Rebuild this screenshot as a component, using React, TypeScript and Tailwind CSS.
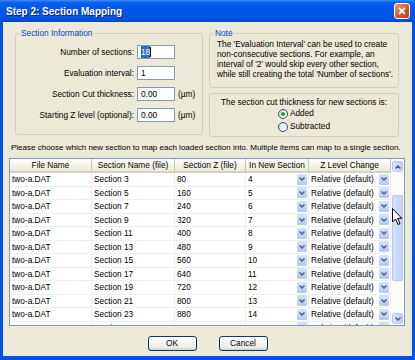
import React from "react";

const rows = [
  ["Section 3", "80", "4"],
  ["Section 5", "160", "5"],
  ["Section 7", "240", "6"],
  ["Section 9", "320", "7"],
  ["Section 11", "400", "8"],
  ["Section 13", "480", "9"],
  ["Section 15", "560", "10"],
  ["Section 17", "640", "11"],
  ["Section 19", "720", "12"],
  ["Section 21", "800", "13"],
  ["Section 23", "880", "14"],
  ["Section 25", "960", "15"],
];

function Chevron({ up = false }: { up?: boolean }) {
  return (
    <svg width="6" height="4" viewBox="0 0 6 4">
      <path
        d={up ? "M0.5 3.5 L3 1 L5.5 3.5" : "M0.5 0.5 L3 3 L5.5 0.5"}
        stroke="#4D6185"
        strokeWidth="1.5"
        fill="none"
      />
    </svg>
  );
}

function DropBtn() {
  return (
    <span className="flex h-[11px] w-[10px] shrink-0 items-center justify-center rounded-[1px] bg-[linear-gradient(to_bottom,#D6E2FE,#B4C8F8)]">
      <Chevron />
    </span>
  );
}

function Field({
  label,
  value,
  unit,
  selected,
}: {
  label: string;
  value: string;
  unit?: boolean;
  selected?: boolean;
}) {
  return (
    <>
      <span className="text-right leading-[14px]">{label}</span>
      <span className="flex h-[14px] items-center border border-[#7F9DB9] bg-white pl-[3px]">
        {selected ? (
          <>
            <span className="bg-[#316AC5] text-white">{value}</span>
            <span className="h-[10px] w-[1px] bg-black" />
          </>
        ) : (
          value
        )}
      </span>
      <span className="leading-[14px]">{unit ? "(µm)" : ""}</span>
    </>
  );
}

function Radio({ checked, label }: { checked?: boolean; label: string }) {
  return (
    <div className="flex h-[13px] items-center gap-[2px]">
      <span className="flex h-[10px] w-[10px] items-center justify-center rounded-full border border-[#1C5180] bg-[linear-gradient(135deg,#DCDCD5,#FFFFFF)]">
        {checked && <span className="h-[4px] w-[4px] rounded-full bg-[#21A121]" />}
      </span>
      <span>{label}</span>
    </div>
  );
}

export default function App() {
  return (
    <div className="relative flex h-[360px] w-[415px] flex-col bg-[#0054E3] font-['Liberation_Sans',Arial,sans-serif] text-[8.3px] text-black">
      {/* Title bar */}
      <div className="flex h-[22px] shrink-0 items-center justify-between bg-[linear-gradient(to_bottom,#3E8CF8_0%,#0A5FEA_12%,#0058E8_45%,#0054E3_80%,#0046CF_100%)] pl-[6px] pr-[5px]">
        <span className="text-[10px] font-bold text-white [text-shadow:1px_1px_0_#0A1F8A]">
          Step 2: Section Mapping
        </span>
        <span className="flex h-[16px] w-[16px] items-center justify-center rounded-[3px] border border-white bg-[linear-gradient(135deg,#F09C7C,#D8552F_55%,#B83A1C)]">
          <svg width="8" height="8" viewBox="0 0 8 8">
            <path d="M1 1 L7 7 M7 1 L1 7" stroke="white" strokeWidth="1.8" />
          </svg>
        </span>
      </div>

      {/* Dialog body */}
      <div className="mx-[3px] mb-[4px] flex flex-1 flex-col bg-[#ECE9D8] px-[6px] pt-[6px]">
        <div className="flex gap-[6px] pl-[6px]">
          <fieldset className="h-[107px] w-[188px] rounded-[3px] border border-[#D0D0BF] px-0">
            <legend className="ml-[4px] px-[1px] leading-[10px] text-[#0046D5]">
              Section Information
            </legend>
            <div className="mt-[7px] grid grid-cols-[118px_38px_auto] gap-x-[3px] gap-y-[7px]">
              <Field label="Number of sections:" value="18" selected />
              <Field label="Evaluation interval:" value="1" />
              <Field label="Section Cut thickness:" value="0.00" unit />
              <Field label="Starting Z level (optional):" value="0.00" unit />
            </div>
          </fieldset>
          <div className="flex w-[190px] flex-col gap-[5px]">
            <fieldset className="h-[60px] rounded-[3px] border border-[#D0D0BF] px-0">
              <legend className="ml-[4px] px-[1px] leading-[10px] text-[#0046D5]">Note</legend>
              <p className="mt-[1px] pl-[7px] leading-[10px]">
                The 'Evaluation Interval' can be used to create
                <br />
                non-consecutive sections. For example, an
                <br />
                interval of '2' would skip every other section,
                <br />
                while still creating the total 'Number of sections'.
              </p>
            </fieldset>
            <div className="flex h-[44px] flex-col items-center rounded-[3px] border border-[#D0D0BF] pt-[3px]">
              <span className="leading-[10px]">The section cut thickness for new sections is:</span>
              <div className="flex flex-col">
                <Radio checked label="Added" />
                <Radio label="Subtracted" />
              </div>
            </div>
          </div>
        </div>

        <p className="mt-[6px] whitespace-nowrap pl-[2px] text-[8px] leading-[10px]">
          Please choose which new section to map each loaded section into. Multiple items can map to a single section.
        </p>

        {/* Table */}
        <div className="mt-[5px] flex h-[168px] w-[396px] border border-[#7F9DB9] bg-white">
          <div className="flex w-[381px] flex-col overflow-hidden">
            <div className="grid h-[14px] shrink-0 grid-cols-[82px_83px_71px_63px_82px] border-b-2 border-[#D6D2C2] bg-[linear-gradient(to_bottom,#FFFFFF,#EBEADB)]">
              {["File Name", "Section Name (file)", "Section Z (file)", "In New Section", "Z Level Change"].map((h) => (
                <div key={h} className="flex items-center justify-center border-r border-[#C7C5B2] leading-[12px]">
                  {h}
                </div>
              ))}
            </div>
            {rows.map((r, i) => (
              <div key={i} className="grid h-[13.5px] shrink-0 grid-cols-[82px_83px_71px_63px_82px]">
                <div className="flex items-center border-b border-r border-[#EFEEE8] pl-[2px]">two-a.DAT</div>
                <div className="flex items-center border-b border-r border-[#EFEEE8] pl-[2px]">{r[0]}</div>
                <div className="flex items-center border-b border-r border-[#EFEEE8] pl-[2px]">{r[1]}</div>
                <div className="flex items-center justify-between border-b border-r border-[#EFEEE8] pl-[2px] pr-[1px]">
                  <span>{r[2]}</span>
                  <DropBtn />
                </div>
                <div className="flex items-center justify-between border-b border-r border-[#EFEEE8] pl-[2px] pr-[1px]">
                  <span>Relative (default)</span>
                  <DropBtn />
                </div>
              </div>
            ))}
          </div>
          {/* Scrollbar */}
          <div className="flex w-[13px] flex-col bg-[#FBFBF9] px-[1px] pt-[2px] pb-[1px]">
            <span className="flex h-[11px] items-center justify-center rounded-[2px] border border-[#B7CAF5] bg-[linear-gradient(to_right,#D7E2FD,#BDCFFA)]">
              <Chevron up />
            </span>
            <span className="h-[23px]" />
            <span className="h-[86px] rounded-[2px] border border-[#B4C7F6] bg-[linear-gradient(to_right,#D3E0FD,#C1D2FA)]" />
            <span className="flex-1" />
            <span className="flex h-[11px] items-center justify-center rounded-[2px] border border-[#B7CAF5] bg-[linear-gradient(to_right,#D7E2FD,#BDCFFA)]">
              <Chevron />
            </span>
          </div>
        </div>

        <div className="mt-[10px] flex justify-center gap-[22px]">
          <button className="h-[15px] w-[49px] rounded-[3px] border border-[#003C74] bg-[linear-gradient(to_bottom,#FFFFFF,#ECEBE6_80%,#D6D0C5)]">
            OK
          </button>
          <button className="h-[15px] w-[49px] rounded-[3px] border border-[#003C74] bg-[linear-gradient(to_bottom,#FFFFFF,#ECEBE6_80%,#D6D0C5)]">
            Cancel
          </button>
        </div>
      </div>

      {/* Mouse cursor */}
      <svg className="absolute left-[392px] top-[208px]" width="11" height="18" viewBox="0 0 11 18">
        <path d="M0.5 0.5 L0.5 14 L3.5 11 L6 16.5 L8 15.5 L5.6 10.3 L9.8 10.3 Z" fill="white" stroke="black" strokeWidth="1" />
      </svg>
    </div>
  );
}
